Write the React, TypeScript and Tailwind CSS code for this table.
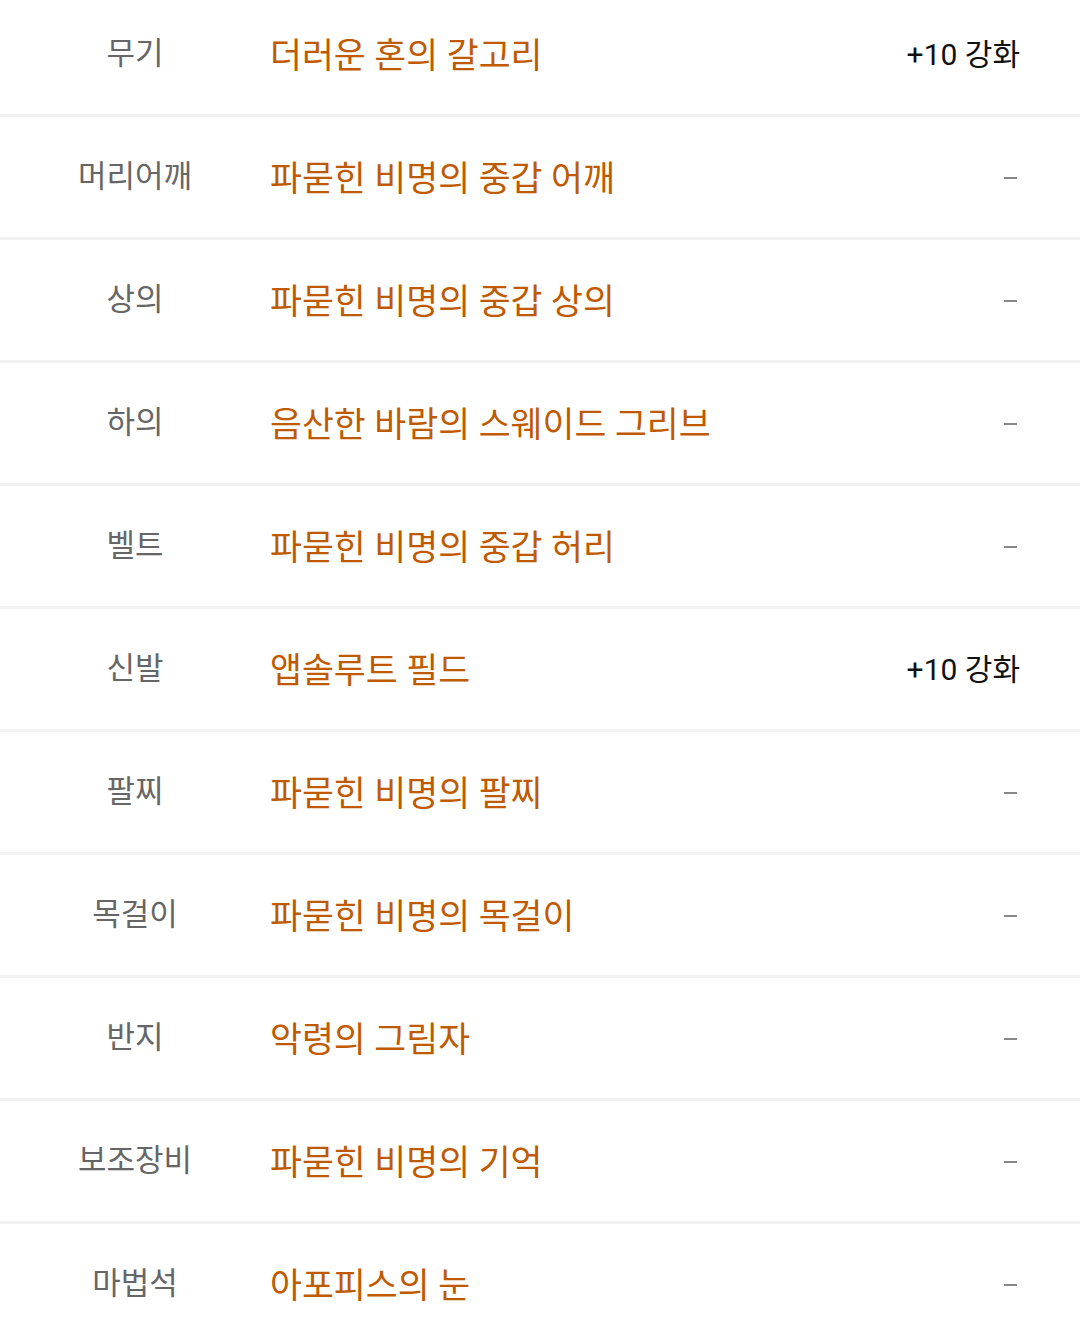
import React from "react";

type Row = { slot: string; name: string; extra?: string };

const rows: Row[] = [
  { slot: "무기", name: "더러운 혼의 갈고리", extra: "+10 강화" },
  { slot: "머리어깨", name: "파묻힌 비명의 중갑 어깨" },
  { slot: "상의", name: "파묻힌 비명의 중갑 상의" },
  { slot: "하의", name: "음산한 바람의 스웨이드 그리브" },
  { slot: "벨트", name: "파묻힌 비명의 중갑 허리" },
  { slot: "신발", name: "앱솔루트 필드", extra: "+10 강화" },
  { slot: "팔찌", name: "파묻힌 비명의 팔찌" },
  { slot: "목걸이", name: "파묻힌 비명의 목걸이" },
  { slot: "반지", name: "악령의 그림자" },
  { slot: "보조장비", name: "파묻힌 비명의 기억" },
  { slot: "마법석", name: "아포피스의 눈" },
];

export default function App() {
  return (
    <div
      className="w-[1080px] h-[1341px] overflow-hidden bg-white"
      style={{ fontFamily: 'Roboto, "Noto Sans CJK KR", sans-serif' }}
    >
      <div className="-mt-[6px]">
        {rows.map((r, i) => (
          <div
            key={i}
            className="flex h-[123px] items-center border-b-[3px] border-[#f2f2f2]"
          >
            <div className="w-[270px] shrink-0 text-center text-[31px] text-[#666666]">
              {r.slot}
            </div>
            <div className="flex-1 pt-[4px] text-[34.7px] text-[#bf5a00]">{r.name}</div>
            <div className="pr-[60px] text-right text-[30px] text-[#111111]">
              {r.extra ? (
                r.extra
              ) : (
                <span className="mr-[3px] mb-[3px] inline-block h-[2px] w-[13px] align-middle bg-[#888888]" />
              )}
            </div>
          </div>
        ))}
      </div>
    </div>
  );
}
